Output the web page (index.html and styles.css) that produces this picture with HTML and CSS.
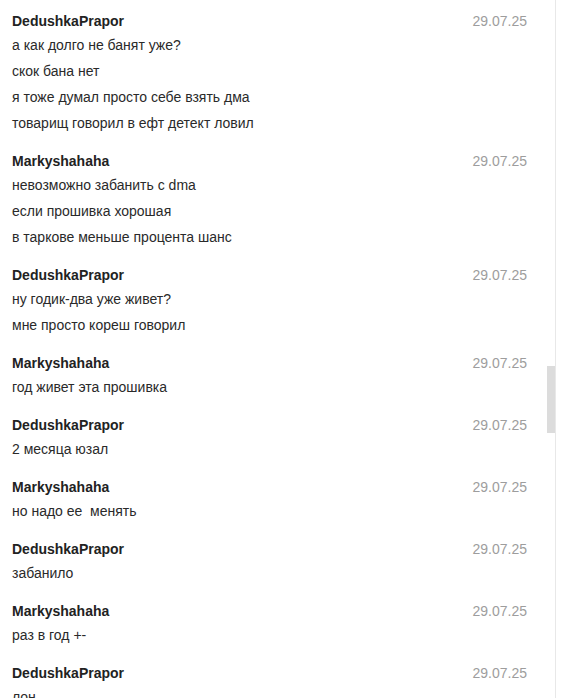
FILE: index.html
```html
<!DOCTYPE html>
<html lang="ru">
<head>
<meta charset="utf-8">
<title>Chat</title>
<link rel="stylesheet" href="styles.css">
</head>
<body>
<div class="chat">
  <div class="msg">
    <div class="head"><span class="name">DedushkaPrapor</span><span class="date">29.07.25</span></div>
    <div class="line">а как долго не банят уже?</div>
    <div class="line">скок бана нет</div>
    <div class="line">я тоже думал просто себе взять дма</div>
    <div class="line">товарищ говорил в ефт детект ловил</div>
  </div>
  <div class="msg">
    <div class="head"><span class="name">Markyshahaha</span><span class="date">29.07.25</span></div>
    <div class="line">невозможно забанить с dma</div>
    <div class="line">если прошивка хорошая</div>
    <div class="line">в таркове меньше процента шанс</div>
  </div>
  <div class="msg">
    <div class="head"><span class="name">DedushkaPrapor</span><span class="date">29.07.25</span></div>
    <div class="line">ну годик-два уже живет?</div>
    <div class="line">мне просто кореш говорил</div>
  </div>
  <div class="msg">
    <div class="head"><span class="name">Markyshahaha</span><span class="date">29.07.25</span></div>
    <div class="line">год живет эта прошивка</div>
  </div>
  <div class="msg">
    <div class="head"><span class="name">DedushkaPrapor</span><span class="date">29.07.25</span></div>
    <div class="line">2 месяца юзал</div>
  </div>
  <div class="msg">
    <div class="head"><span class="name">Markyshahaha</span><span class="date">29.07.25</span></div>
    <div class="line">но надо ее&nbsp; менять</div>
  </div>
  <div class="msg">
    <div class="head"><span class="name">DedushkaPrapor</span><span class="date">29.07.25</span></div>
    <div class="line">забанило</div>
  </div>
  <div class="msg">
    <div class="head"><span class="name">Markyshahaha</span><span class="date">29.07.25</span></div>
    <div class="line">раз в год +-</div>
  </div>
  <div class="msg">
    <div class="head"><span class="name">DedushkaPrapor</span><span class="date">29.07.25</span></div>
    <div class="line">лон</div>
  </div>
  <div class="thumb"></div>
</div>
</body>
</html>
```

FILE: styles.css
```css
html, body {
  margin: 0;
  padding: 0;
  background: #ffffff;
  height: 698px;
  overflow: hidden;
}
body {
  font-family: "Liberation Sans", Arial, sans-serif;
  font-size: 14px;
  color: #2a2a2a;
}
.chat {
  position: relative;
  width: 555px;
  height: 698px;
  border-right: 1px solid #e8e8e8;
  overflow: hidden;
}
.msg {
  padding: 11px 28px 4px 12px;
}
.head {
  display: flex;
  justify-content: space-between;
  line-height: 20px;
  margin-bottom: 1px;
}
.name {
  font-weight: bold;
  color: #222222;
}
.date {
  color: #9d9d9d;
}
.line {
  line-height: 26px;
}
.thumb {
  position: absolute;
  left: 547px;
  top: 366px;
  width: 8px;
  height: 67px;
  background: #dcdcdc;
}
```
